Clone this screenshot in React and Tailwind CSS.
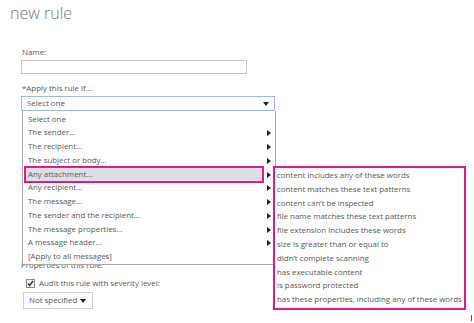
import React from "react";

const items = [
  { label: "Select one", arrow: false },
  { label: "The sender...", arrow: true },
  { label: "The recipient...", arrow: true },
  { label: "The subject or body...", arrow: true },
  { label: "Any attachment...", arrow: true, active: true },
  { label: "Any recipient...", arrow: true },
  { label: "The message...", arrow: true },
  { label: "The sender and the recipient...", arrow: true },
  { label: "The message properties...", arrow: true },
  { label: "A message header...", arrow: true },
  { label: "[Apply to all messages]", arrow: false },
];

const subItems = [
  "content includes any of these words",
  "content matches these text patterns",
  "content can’t be inspected",
  "file name matches these text patterns",
  "file extension includes these words",
  "size is greater than or equal to",
  "didn’t complete scanning",
  "has executable content",
  "is password protected",
  "has these properties, including any of these words",
];

function Arrow() {
  return (
    <svg width="4" height="6" viewBox="0 0 4 6" className="absolute right-[4px] top-[4px]">
      <path d="M0 0 L4 3 L0 6 Z" fill="#222" />
    </svg>
  );
}

export default function App() {
  return (
    <div className="relative w-[474px] h-[323px] bg-white overflow-hidden font-['Open_Sans',sans-serif] text-[7.9px] text-[#5a5a5a]">
      <h1 className="pl-[10px] pt-[3px] text-[16px] leading-[20px] font-light text-[#777]">new rule</h1>

      <div className="pl-[21px] mt-[23px]">
        <div className="leading-[12px] pl-[1px]">Name:</div>
        <div className="mt-[2px] w-[226px] h-[14px] border border-[#c6c6c6]" />

        <div className="mt-[8px] leading-[12px] pl-[1px]">*Apply this rule if...</div>
        <div className="relative mt-[2px] w-[254px]">
          <div className="h-[15px] border border-[#9fbbdc] flex items-center justify-between pl-[5px] pr-[5px]">
            <span>Select one</span>
            <svg width="6" height="4" viewBox="0 0 6 4">
              <path d="M0 0 L6 0 L3 4 Z" fill="#222" />
            </svg>
          </div>

          {/* dropdown list */}
          <div className="absolute z-10 left-[1px] top-[15px] w-[254px] bg-white border border-t-0 border-[#a9a9a9] pt-[1.5px]">
            {items.map((it) => (
              <div key={it.label} className="relative h-[13.75px] leading-[13.75px] pl-[5px] whitespace-nowrap">
                {it.active && (
                  <div className="absolute left-[1px] right-[11px] -top-[2px] -bottom-[2px] bg-[#dcdee3] border-2 border-[#e3198c]" />
                )}
                <span className="relative">{it.label}</span>
                {it.arrow && <Arrow />}
                {it.active && (
                  <div className="absolute left-[250px] -top-[2px] w-[193px] bg-white border-2 border-[#e3198c] pt-[1.5px] pb-[1px] pl-[2px]">
                    {subItems.map((s) => (
                      <div key={s} className="h-[13.8px] leading-[13.8px] whitespace-nowrap">
                        {s}
                      </div>
                    ))}
                  </div>
                )}
              </div>
            ))}
          </div>
        </div>

        <div className="mt-[148px] leading-[12px]">Properties of this rule:</div>

        <div className="mt-[6px] flex items-center gap-[4px] pl-[5px] leading-[12px]">
          <svg width="9" height="9" viewBox="0 0 9 9">
            <rect x="0.5" y="0.5" width="8" height="8" fill="#f2f2f2" stroke="#8a8a8a" />
            <path d="M2 4.5 L3.8 6.5 L7 2" fill="none" stroke="#333" strokeWidth="1.4" />
          </svg>
          <span>Audit this rule with severity level:</span>
        </div>

        <div className="mt-[3px] ml-[2px] w-[70px] h-[17px] border border-[#d0d0d0] flex items-center justify-between pl-[5px] pr-[6px] whitespace-nowrap">
          <span>Not specified</span>
          <svg width="6" height="4" viewBox="0 0 6 4">
            <path d="M0 0 L6 0 L3 4 Z" fill="#222" />
          </svg>
        </div>
      </div>

      <div className="absolute left-[471px] top-[315px] w-[1px] h-[6px] bg-[#555]" />
    </div>
  );
}
